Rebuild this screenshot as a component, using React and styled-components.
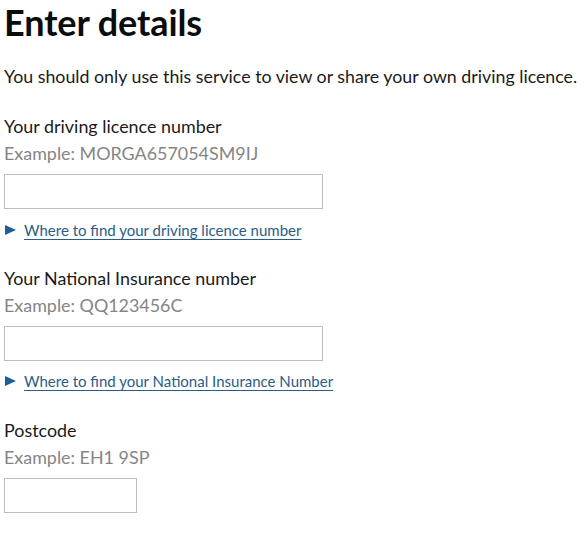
import React from 'react';
import styled, { createGlobalStyle } from 'styled-components';

const GlobalStyle = createGlobalStyle`
  body {
    margin: 0;
    background: #fff;
    font-family: Lato, "Noto Sans", sans-serif;
    color: #0b0c0c;
  }
`;

const Page = styled.main`
  padding: 2px 4px 0 4px;
`;

const Heading = styled.h1`
  margin: 0;
  font-size: 36px;
  line-height: 40px;
  font-weight: 700;
  letter-spacing: -0.1px;
`;

const Lead = styled.p`
  margin: 22px 0 0 0;
  font-size: 17.8px;
  line-height: 25px;
  color: #1a1a1a;
  white-space: nowrap;
`;

const Field = styled.div`
  display: flex;
  flex-direction: column;
  align-items: flex-start;
  margin-top: ${(p) => p.$top}px;
`;

const Label = styled.label`
  font-size: 17.9px;
  line-height: 25px;
  color: #1a1a1a;
`;

const Hint = styled.span`
  font-size: 17.9px;
  line-height: 25px;
  color: #858585;
  margin-top: 2px;
`;

const Input = styled.input`
  box-sizing: border-box;
  width: ${(p) => p.$width}px;
  height: 35px;
  margin-top: 8px;
  border: 1px solid #bdbdbd;
  background: #fff;
  font: inherit;
`;

const Details = styled.a`
  display: flex;
  align-items: center;
  gap: 8px;
  margin-top: ${(p) => p.$top}px;
  font-size: 15px;
  line-height: 20px;
  color: #2b5c86;
  text-decoration: none;
`;

const Arrow = styled.span`
  width: 0;
  height: 0;
  border-top: 5.5px solid transparent;
  border-bottom: 5.5px solid transparent;
  border-left: 11px solid #1d5f93;
  margin-left: 1px;
`;

const LinkText = styled.span`
  text-decoration: underline;
  text-underline-offset: 3px;
`;

const App = () => {
  return (
    <>
      <GlobalStyle />
      <Page>
        <Heading>Enter details</Heading>
        <Lead>You should only use this service to view or share your own driving licence.</Lead>

        <Field $top={25}>
          <Label>Your driving licence number</Label>
          <Hint>Example: MORGA657054SM9IJ</Hint>
          <Input $width={319} />
          <Details href="#" $top={11}>
            <Arrow />
            <LinkText>Where to find your driving licence number</LinkText>
          </Details>
        </Field>

        <Field $top={25.5}>
          <Label>Your National Insurance number</Label>
          <Hint>Example: QQ123456C</Hint>
          <Input $width={319} />
          <Details href="#" $top={10.5}>
            <Arrow />
            <LinkText>Where to find your National Insurance Number</LinkText>
          </Details>
        </Field>

        <Field $top={27}>
          <Label>Postcode</Label>
          <Hint>Example: EH1 9SP</Hint>
          <Input $width={133} />
        </Field>
      </Page>
    </>
  );
};

export default App;
